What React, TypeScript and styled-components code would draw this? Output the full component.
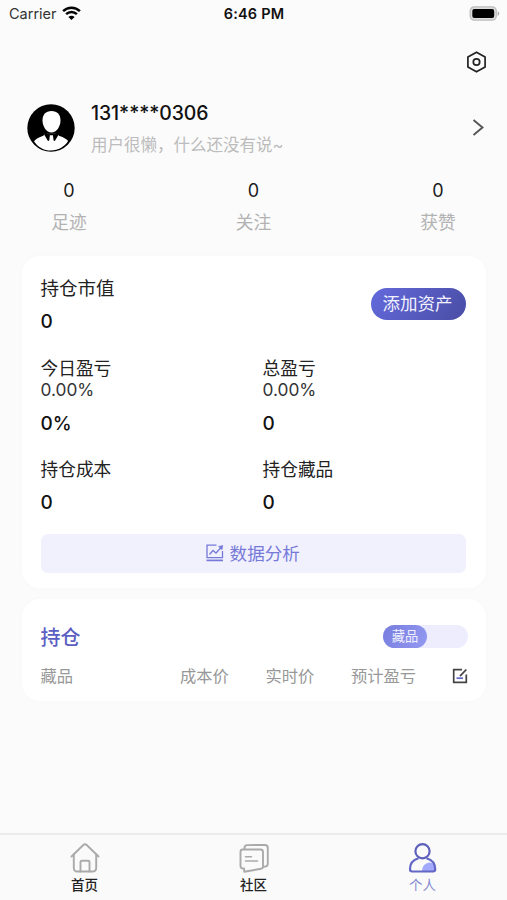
import React from "react";
import styled, { createGlobalStyle } from "styled-components";

const GlobalStyle = createGlobalStyle`
  * { box-sizing: border-box; }
  body { margin: 0; background: #fbfbfb; }
`;

const Screen = styled.div`
  display: flex;
  flex-direction: column;
  width: 507px;
  height: 900px;
  overflow: hidden;
  background: #fbfbfb;
  color: #1c1c1c;
  font-family: Inter, "Noto Sans CJK SC", sans-serif;
`;

const StatusBar = styled.header`
  display: grid;
  grid-template-columns: 1fr auto 1fr;
  align-items: center;
  height: 28px;
  padding: 0 7px 0 9px;
`;

const Carrier = styled.div`
  display: flex;
  align-items: center;
  gap: 5px;
  font-size: 14.5px;
  line-height: 18px;
  padding-bottom: 1px;
  color: #333;

  svg { margin-bottom: 1px; }
`;

const Clock = styled.div`
  padding: 0 1px 1px 0;
  font-size: 14.5px;
  line-height: 18px;
  font-weight: 600;
  letter-spacing: 0.2px;
  color: #111;
`;

const BatterySlot = styled.div`
  display: flex;
  justify-content: flex-end;
  padding-bottom: 2px;
`;

const Toolbar = styled.div`
  display: flex;
  justify-content: flex-end;
  align-items: center;
  height: 68px;
  padding-right: 20px;
`;

const Profile = styled.section`
  display: flex;
  align-items: center;
  height: 64px;
  padding: 0 22px 0 27px;
`;

const Identity = styled.div`
  flex: 1;
  margin-left: 16px;
  padding-top: 2px;
`;

const UserName = styled.div`
  font-size: 19.4px;
  line-height: 30px;
  font-weight: 500;
  letter-spacing: -0.05px;
  color: #111;
`;

const Bio = styled.div`
  margin-top: 2px;
  font-size: 16.5px;
  line-height: 30px;
  color: #bcbcbc;
`;

const Stats = styled.section`
  display: flex;
  justify-content: space-between;
  height: 96px;
  padding: 15px 49px 0;
`;

const Stat = styled.div`
  width: 40px;
  text-align: center;
  white-space: nowrap;
`;

const StatValue = styled.div`
  font-size: 18px;
  line-height: 31px;
`;

const StatLabel = styled.div`
  font-size: 17.8px;
  line-height: 33px;
  color: #b2b2b2;
`;

const Card = styled.section`
  flex: none;
  margin: 0 21px 0 22px;
  padding: 0 20px 0 18.5px;
  border-radius: 18px;
  background: #fff;
  box-shadow: 0 0 8px rgba(0, 0, 0, 0.015);
`;

const AssetsCard = styled(Card)`
  height: 332px;
`;

const HoldingsCard = styled(Card)`
  height: 102px;
  margin-top: 11px;
`;

const Summary = styled.div`
  display: flex;
  align-items: center;
  justify-content: space-between;
  height: 95px;
`;

const Label = styled.div<{ $size?: number }>`
  font-size: ${(p) => p.$size ?? 17.7}px;
  line-height: 24px;
  color: #222;
`;

const Value = styled.div`
  font-size: 19px;
  line-height: 24px;
  font-weight: 500;
  color: #111;
`;

const SummaryText = styled.div`
  padding-top: 2px;
  ${Value} { margin-top: 10px; }
`;

const AddButton = styled.button`
  width: 95px;
  height: 32px;
  padding: 0 2px 0 0;
  border: 0;
  border-radius: 16px;
  background: linear-gradient(125deg, #6268d9 5%, #4c50aa 90%);
  color: #f2f2ff;
  font: 400 17.5px/31px Inter, "Noto Sans CJK SC", sans-serif;
  white-space: nowrap;
`;

const Metrics = styled.div`
  display: grid;
  grid-template-columns: 222px 1fr;
  grid-template-rows: 101px 76px;
  padding-top: 6px;
`;

const Metric = styled.div`
  ${Value} { margin-top: 9px; }
`;

const Rate = styled.div`
  font-size: 17.3px;
  line-height: 22px;
  margin-top: -2px;
  color: #333;
  & + ${Value} { margin-top: 11px; }
`;

const AnalysisButton = styled.button`
  display: flex;
  align-items: center;
  justify-content: center;
  gap: 6px;
  width: 100%;
  height: 39px;
  padding: 0 1px 0 0;
  border: 0;
  border-radius: 7px;
  background: #f1f1fe;
  color: #7779d9;
  font: 400 17.6px/30px Inter, "Noto Sans CJK SC", sans-serif;

  svg { margin-bottom: 1px; }
`;

const HoldingsHead = styled.div`
  display: flex;
  align-items: center;
  justify-content: space-between;
  height: 56px;
  padding-top: 18px;
  margin-right: -2px;
`;

const HoldingsTitle = styled.h2`
  margin: 0;
  padding-top: 3px;
  font-size: 20px;
  line-height: 30px;
  font-weight: 500;
  color: #5b5fc2;
`;

const Switch = styled.div`
  width: 85px;
  height: 23px;
  border-radius: 12px;
  background: #ededfe;
`;

const SwitchThumb = styled.div`
  width: 44px;
  height: 23px;
  border-radius: 12px;
  background: linear-gradient(120deg, #777ddd, #9499f2);
  color: #f1f1ff;
  font-size: 13.3px;
  line-height: 23px;
  text-align: center;
`;

const Columns = styled.div`
  display: grid;
  grid-template-columns: 139.5px 85.5px 85.5px 1fr auto;
  align-items: center;
  height: 42px;
  margin-right: -2px;
  font-size: 16.3px;
  line-height: 24px;
  color: #989898;
`;

const TabBar = styled.nav`
  display: grid;
  grid-template-columns: repeat(3, 1fr);
  height: 67px;
  margin-top: auto;
  border-top: 2px solid #ebebeb;
  background: #fafafa;
`;

const Tab = styled.div<{ $active?: boolean }>`
  display: flex;
  flex-direction: column;
  align-items: center;
  gap: 2px;
  padding-top: 7px;
  font-size: 13.5px;
  line-height: 20px;
  font-weight: ${(p) => (p.$active ? 400 : 500)};
  color: ${(p) => (p.$active ? "#8588d0" : "#222")};
`;

const WifiIcon = () => (
  <svg width="19" height="15" viewBox="0 0 19 15" fill="none" stroke="#050505" strokeWidth="2.5">
    <path d="M1.1 5.1C5.8.5 13.2.5 17.9 5.1" />
    <path d="M4.1 8.2c3.1-3 7.7-3 10.8 0" />
    <path d="M9.5 14 6.4 10.9c1.8-1.6 4.4-1.6 6.2 0Z" fill="#050505" stroke="none" />
  </svg>
);

const BatteryIcon = () => (
  <svg width="31" height="15" viewBox="0 0 31 15">
    <rect x="1.2" y=".8" width="26.1" height="13.4" rx="4.2" fill="#ddd" stroke="#bdbdbd" strokeWidth="1.3" />
    <rect x="3.3" y="2.9" width="21.9" height="9.2" rx="2" fill="#000" />
    <path d="M28.7 5.2c2 .8 2 3.8 0 4.6Z" fill="#aaa" />
  </svg>
);

const SettingsIcon = () => (
  <svg width="21" height="22" viewBox="0 0 21 22" fill="none" stroke="#222" strokeWidth="1.7" strokeLinejoin="round">
    <path d="m10.5 1.2 8.6 4.9v9.8l-8.6 4.9-8.6-4.9V6.1Z" />
    <circle cx="10.5" cy="11" r="3.2" />
  </svg>
);

const Avatar = () => (
  <svg width="48" height="48" viewBox="0 0 48 48">
    <circle cx="24" cy="24" r="23.7" fill="#000" />
    <path d="M24.5 7C30.4 7 33.5 10.8 33.5 16.4c0 5.8-3.8 12-9 12s-9-6.2-9-12C15.5 10.8 18.6 7 24.5 7Z" fill="#fff" />
    <path d="M18 29.5h12.500l1.400 2.300c5.200 1.700 8.100 3.700 9.200 5.300C37.300 43.100 31.300 46.500 24 46.500S10.700 43.100 7 37.200c1.500-2 4.900-3.900 9.300-5.400Z" fill="#fff" />
    <path d="M18.200 28.300 23 30.600l-.8 5.900-1.200.5-3.900-6.500ZM30.600 28.300l-4.800 2.300.8 5.900 1.200.5 3.900-6.500Z" fill="#000" />
    <path d="M20.500 29.200h7.800l-2.600 2h-2.600Z" fill="#000" />
  </svg>
);

const ChevronIcon = () => (
  <svg width="13" height="18" viewBox="0 0 13 18" fill="none" stroke="#555" strokeWidth="1.9">
    <path d="m1.5 1 9 7.500-9 7.500" />
  </svg>
);

const ChartIcon = () => (
  <svg width="18" height="18" viewBox="0 0 18 18" fill="none" stroke="#7779d9" strokeWidth="1.3">
    <path d="M10.500 1.200H1v12.500h15.500V7" />
    <path d="M.5 16.400h16.500" strokeWidth="1.700" />
    <path d="m3.500 10.500 3.500-4 3 2.500 5-5.500" />
    <path d="m12.500 2.500 4.300-1-.8 4.300Z" fill="#7779d9" strokeWidth=".6" />
  </svg>
);

const EditIcon = () => (
  <svg width="16" height="16" viewBox="0 0 16 16" fill="none" stroke="#444" strokeWidth="1.7">
    <path d="M10 1.700H1.700v12.600h12.600V6.500" />
    <path d="m8 8.200 6.300-6.700" />
    <path d="M4.500 10.200h6.500" stroke="#6267c9" />
  </svg>
);

const HomeIcon = () => (
  <svg width="30" height="31" viewBox="0 0 30 31" fill="none" stroke="#aaa" strokeWidth="1.9" strokeLinecap="round" strokeLinejoin="round">
    <path d="M1.500 14.500 13.300 3q1.700-1.500 3.400 0L28.500 14.500" />
    <path d="M3.800 12.500v13.200q0 3.800 3.800 3.800h14.800q3.800 0 3.800-3.800V12.500" />
    <path d="M10.500 29.500V20q0-1.300 1.300-1.300h6.400q1.300 0 1.300 1.300v9.500" />
  </svg>
);

const CommunityIcon = () => (
  <svg width="30" height="31" viewBox="0 0 30 31" fill="none" stroke="#aaa" strokeWidth="1.9" strokeLinecap="round" strokeLinejoin="round">
    <path d="M5.500 6.800V5.800q0-2.600 2.800-2.700L26 3q2.800 0 2.800 2.800v16.200q0 2.700-4.300 2.700" />
    <path d="M3.500 7.500h18q2.500 0 2.500 2.500v15q0 1.500-2 1.800L5.300 29.800l-.2-3.300H4q-2.500 0-2.500-2.500V10q0-2.500 2-2.500Z" />
    <path d="M6.500 14.700h6M6.500 19h12" strokeWidth="1.500" />
  </svg>
);

const PersonIcon = () => (
  <svg width="30" height="31" viewBox="0 0 30 31" fill="none">
    <path d="M14 29.500c0-5 3-8.500 7.500-9 3 .2 6 3 6 7.500q0 1.500-1.500 1.500Z" fill="#a3a9fb" />
    <circle cx="14.500" cy="9.300" r="7.100" stroke="#5d61bb" strokeWidth="2.200" />
    <path d="M10.500 16.200C5 17.700 2 22 2 27.300q0 2.200 2.200 2.200h20.800q2.200 0 2.200-2.200C27.200 22 24 17.700 18.500 16.200" stroke="#6266c5" strokeWidth="2.200" />
  </svg>
);

const stats = ["足迹", "关注", "获赞"];

const metrics = [
  { label: "今日盈亏", rate: "0.00%", value: "0%" },
  { label: "总盈亏", rate: "0.00%", value: "0" },
  { label: "持仓成本", value: "0" },
  { label: "持仓藏品", value: "0" },
];

export default function App() {
  return (
    <Screen>
      <GlobalStyle />
      <StatusBar>
        <Carrier>Carrier <WifiIcon /></Carrier>
        <Clock>6:46 PM</Clock>
        <BatterySlot><BatteryIcon /></BatterySlot>
      </StatusBar>
      <Toolbar><SettingsIcon /></Toolbar>
      <Profile>
        <Avatar />
        <Identity>
          <UserName>131****0306</UserName>
          <Bio>用户很懒，什么还没有说~</Bio>
        </Identity>
        <ChevronIcon />
      </Profile>
      <Stats>
        {stats.map((label) => (
          <Stat key={label}>
            <StatValue>0</StatValue>
            <StatLabel>{label}</StatLabel>
          </Stat>
        ))}
      </Stats>
      <AssetsCard>
        <Summary>
          <SummaryText>
            <Label $size={18.5}>持仓市值</Label>
            <Value>0</Value>
          </SummaryText>
          <AddButton>添加资产</AddButton>
        </Summary>
        <Metrics>
          {metrics.map((m) => (
            <Metric key={m.label}>
              <Label>{m.label}</Label>
              {m.rate && <Rate>{m.rate}</Rate>}
              <Value>{m.value}</Value>
            </Metric>
          ))}
        </Metrics>
        <AnalysisButton><ChartIcon />数据分析</AnalysisButton>
      </AssetsCard>
      <HoldingsCard>
        <HoldingsHead>
          <HoldingsTitle>持仓</HoldingsTitle>
          <Switch><SwitchThumb>藏品</SwitchThumb></Switch>
        </HoldingsHead>
        <Columns>
          <span>藏品</span>
          <span>成本价</span>
          <span>实时价</span>
          <span>预计盈亏</span>
          <EditIcon />
        </Columns>
      </HoldingsCard>
      <TabBar>
        <Tab><HomeIcon />首页</Tab>
        <Tab><CommunityIcon />社区</Tab>
        <Tab $active><PersonIcon />个人</Tab>
      </TabBar>
    </Screen>
  );
}
